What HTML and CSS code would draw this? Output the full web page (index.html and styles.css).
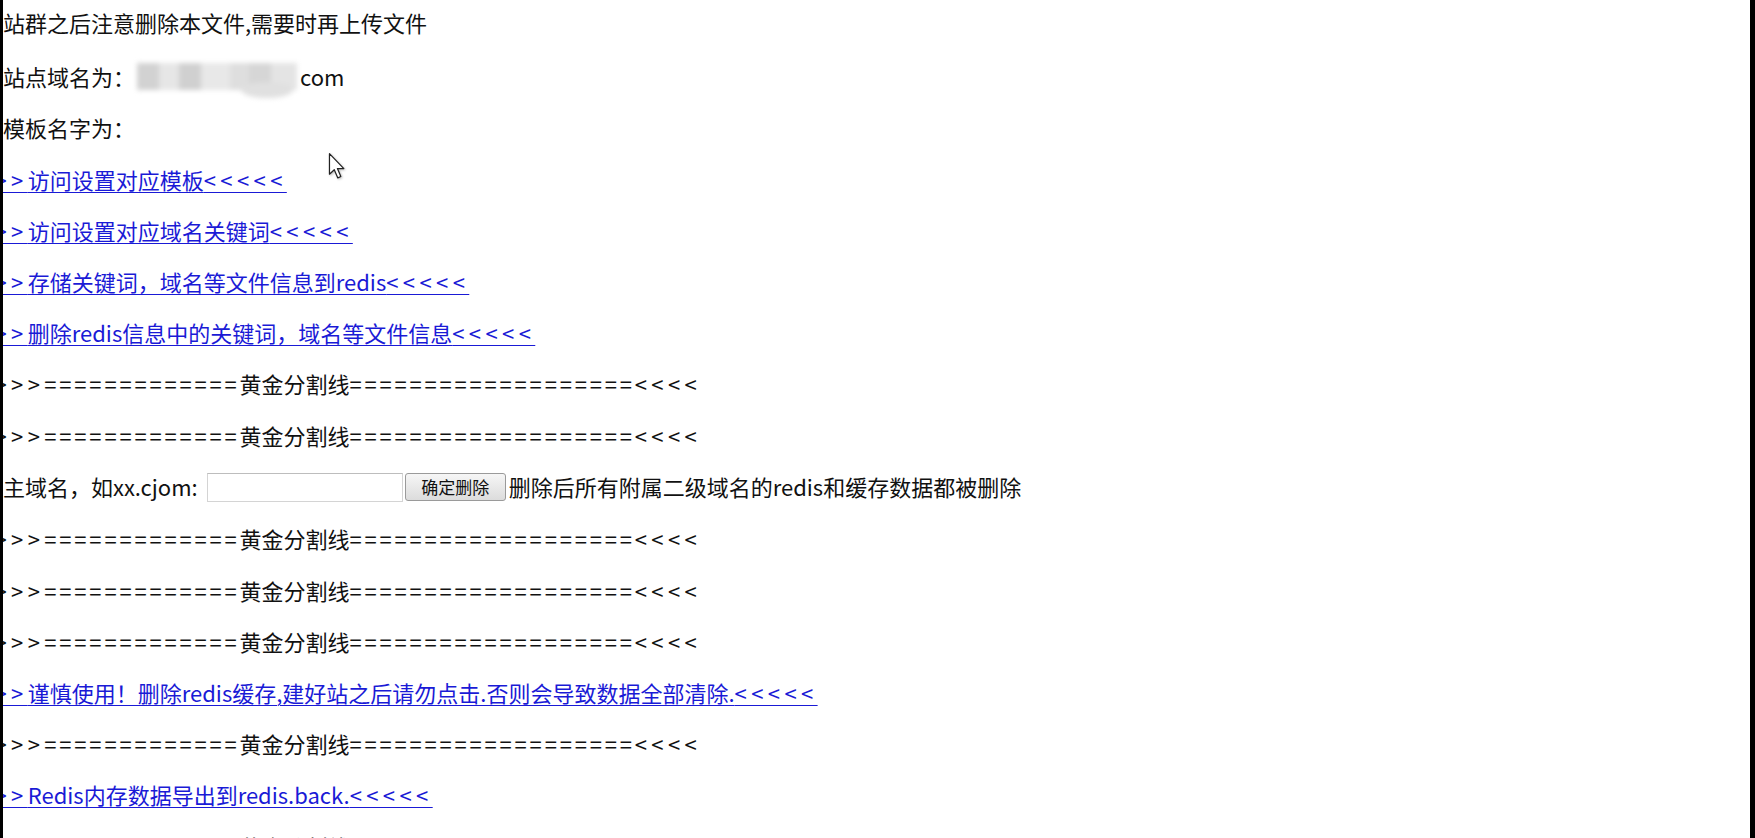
FILE: index.html
```html
<!DOCTYPE html>
<html lang="zh-CN">
<head>
<meta charset="utf-8">
<title>站群管理</title>
<link rel="stylesheet" href="styles.css">
</head>
<body>
<div class="screen">
  <main class="page">
    <p class="line first">站群之后注意删除本文件,需要时再上传文件</p>
    <p class="line">站点域名为：<span class="masked" aria-hidden="true"><span class="blob"></span></span>com</p>
    <p class="line">模板名字为：</p>
    <p class="line cut"><a href="#"><span class="arr">&gt;&gt;</span>访问设置对应模板<span class="arr">&lt;&lt;&lt;&lt;&lt;</span></a></p>
    <p class="line cut"><a href="#"><span class="arr">&gt;&gt;</span>访问设置对应域名关键词<span class="arr">&lt;&lt;&lt;&lt;&lt;</span></a></p>
    <p class="line cut"><a href="#"><span class="arr">&gt;&gt;</span>存储关键词，域名等文件信息到redis<span class="arr">&lt;&lt;&lt;&lt;&lt;</span></a></p>
    <p class="line cut"><a href="#"><span class="arr">&gt;&gt;</span>删除redis信息中的关键词，域名等文件信息<span class="arr">&lt;&lt;&lt;&lt;&lt;</span></a></p>
    <p class="line cut"><span class="arr">&gt;&gt;&gt;</span><span class="eq">=============</span>黄金分割线<span class="eq">===================</span><span class="arr">&lt;&lt;&lt;&lt;</span></p>
    <p class="line cut"><span class="arr">&gt;&gt;&gt;</span><span class="eq">=============</span>黄金分割线<span class="eq">===================</span><span class="arr">&lt;&lt;&lt;&lt;</span></p>
    <form class="line form-row" action="#">
      <label for="domain">主域名，如xx.cjom:</label>
      <input id="domain" class="field" type="text">
      <button class="btn" type="button">确定删除</button>
      <span>删除后所有附属二级域名的redis和缓存数据都被删除</span>
    </form>
    <p class="line cut"><span class="arr">&gt;&gt;&gt;</span><span class="eq">=============</span>黄金分割线<span class="eq">===================</span><span class="arr">&lt;&lt;&lt;&lt;</span></p>
    <p class="line cut"><span class="arr">&gt;&gt;&gt;</span><span class="eq">=============</span>黄金分割线<span class="eq">===================</span><span class="arr">&lt;&lt;&lt;&lt;</span></p>
    <p class="line cut"><span class="arr">&gt;&gt;&gt;</span><span class="eq">=============</span>黄金分割线<span class="eq">===================</span><span class="arr">&lt;&lt;&lt;&lt;</span></p>
    <p class="line cut"><a href="#"><span class="arr">&gt;&gt;</span>谨慎使用！删除redis缓存,建好站之后请勿点击.否则会导致数据全部清除.<span class="arr">&lt;&lt;&lt;&lt;&lt;</span></a></p>
    <p class="line cut"><span class="arr">&gt;&gt;&gt;</span><span class="eq">=============</span>黄金分割线<span class="eq">===================</span><span class="arr">&lt;&lt;&lt;&lt;</span></p>
    <p class="line cut"><a href="#"><span class="arr">&gt;&gt;</span>Redis内存数据导出到redis.back.<span class="arr">&lt;&lt;&lt;&lt;&lt;</span></a></p>
    <p class="line cut"><span class="arr">&gt;&gt;&gt;</span><span class="eq">=============</span>黄金分割线<span class="eq">===================</span><span class="arr">&lt;&lt;&lt;&lt;</span></p>
  </main>
  <svg class="cursor" width="18" height="26" viewBox="0 0 12 19" aria-hidden="true">
    <path d="M0.5 0.5 L0.5 15.5 L4 12.2 L6.6 18.2 L8.8 17.2 L6.3 11.4 L11 11.4 Z" fill="#fff" stroke="#222" stroke-width="0.9" stroke-linejoin="round"/>
  </svg>
</div>
</body>
</html>
```
FILE: styles.css
```css
html, body {
  margin: 0;
  padding: 0;
  background: #000;
  height: 100%;
  overflow: hidden;
}

.screen {
  position: relative;
  height: 838px;
  margin: 0 5px 0 3px;
  background: #fff;
  overflow: hidden;
}

.page {
  display: flex;
  flex-direction: column;
  gap: 21.8px;
  padding-top: 8px;
  font-family: "Noto Sans CJK SC", "Noto Sans", sans-serif;
  font-size: 22px;
  line-height: 29.4px;
  color: #111;
}

.line {
  margin: 0;
  white-space: nowrap;
  height: 29.4px;
}

.first {
  margin-bottom: 3px;
}

.cut {
  margin-left: -8.5px;
}

.arr {
  letter-spacing: 4.4px;
}

.eq {
  letter-spacing: 2.8px;
}

.line a {
  color: #1a1ad6;
  text-decoration: underline;
  text-underline-offset: 3px;
  text-decoration-thickness: 1px;
}

.masked {
  position: relative;
  display: inline-block;
  width: 160px;
  height: 27px;
  margin: 0 3px 0 2px;
  vertical-align: -4px;
  background: linear-gradient(90deg,
    #d2d2d2 0 14%, #e6e6e6 14% 26%, #d0d0d0 26% 40%,
    #e8e8e8 40% 58%, #dedede 58% 70%, #d6d6d6 70% 84%, #e4e4e4 84% 100%);
  filter: blur(2.5px);
}

.blob {
  position: absolute;
  right: 4px;
  bottom: -8px;
  width: 52px;
  height: 16px;
  border-radius: 50%;
  background: #e0e0e0;
}

.form-row {
  display: flex;
  align-items: center;
  height: 31px;
}

.form-row label {
  margin-right: 9px;
}

.field {
  width: 196px;
  height: 29px;
  box-sizing: border-box;
  border: 1px solid #d4d4d4;
  border-top-color: #bdbdbd;
  background: #fff;
  margin: 0 2px 0 0;
  padding: 0 4px;
  font: inherit;
}

.btn {
  height: 28px;
  width: 101px;
  box-sizing: border-box;
  border: 1px solid #9a9a9a;
  border-radius: 3px;
  background: linear-gradient(#f6f6f6, #dcdcdc);
  font-family: "Noto Sans CJK SC", sans-serif;
  font-size: 17px;
  line-height: 24px;
  color: #111;
  padding: 0;
  margin-right: 3px;
}

.cursor {
  position: absolute;
  left: 325px;
  top: 153px;
  filter: drop-shadow(1px 1px 1px rgba(0,0,0,0.25));
}
```
